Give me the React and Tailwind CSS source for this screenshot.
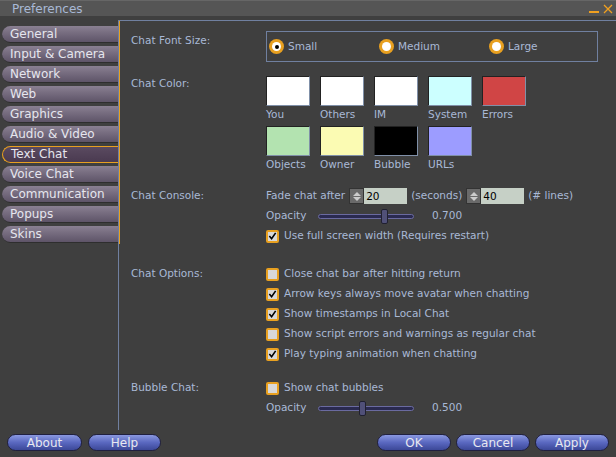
import React from "react";

const tabs = ["General","Input & Camera","Network","Web","Graphics","Audio & Video","Text Chat","Voice Chat","Communication","Popups","Skins"];
const sw1 = [["You","#ffffff"],["Others","#ffffff"],["IM","#ffffff"],["System","#ccffff"],["Errors","#d04545"]];
const sw2 = [["Objects","#b3e3b0"],["Owner","#fbfbb3"],["Bubble","#000000"],["URLs","#9c9cff"]];

function Radio({ on, label }) {
  return (
    <div className="flex items-center gap-1">
      <div className="w-[15px] h-[15px] rounded-full bg-[#e8a020] flex items-center justify-center">
        <div className="w-[9px] h-[9px] rounded-full bg-white flex items-center justify-center">
          {on && <div className="w-[4px] h-[4px] rounded-full bg-black" />}
        </div>
      </div>
      <span>{label}</span>
    </div>
  );
}
function Check({ on, label }) {
  return (
    <div className="flex items-center gap-[5px] h-[20px]">
      <div className="w-[13px] h-[13px] rounded-[2px] border-2 border-[#e8a020] bg-[#d8d8d8] flex items-center justify-center">
        {on && <svg width="10" height="10" viewBox="0 0 10 10"><path d="M1.5 5 L4 8 L8.5 1.5" stroke="#000" strokeWidth="1.8" fill="none"/></svg>}
      </div>
      <span>{label}</span>
    </div>
  );
}
function Slider({ pos, value }) {
  return (
    <div className="flex items-center h-[20px]">
      <span className="w-[52px]">Opacity</span>
      <div className="relative w-[96px] h-[5px] rounded-full bg-[#2a2a50] border border-[#6a6aa0]">
        <div className="absolute top-[-6px] w-[7px] h-[15px] rounded-[2px] bg-[#505078] border border-[#202030]" style={{ left: pos }} />
      </div>
      <span className="ml-[18px]">{value}</span>
    </div>
  );
}
function Spin({ v }) {
  return (
    <div className="flex items-center">
      <div className="w-[15px] h-[16px] bg-[#6a6a6a] border border-[#333] flex flex-col items-center justify-center gap-[1px]">
        <div className="w-0 h-0 border-l-[4px] border-r-[4px] border-b-[4px] border-l-transparent border-r-transparent border-b-[#ccc]" />
        <div className="w-0 h-0 border-l-[4px] border-r-[4px] border-t-[4px] border-l-transparent border-r-transparent border-t-[#ccc]" />
      </div>
      <div className="h-[16px] bg-[#c6d0c6] text-black pl-[2px] leading-[16px]" style={{ width: 43 }}>{v}</div>
    </div>
  );
}
function Btn({ t, w }) {
  return (
    <div className="h-[17px] rounded-full border border-[#202040] bg-gradient-to-b from-[#8a98e0] via-[#5a68c0] to-[#3c4898] text-[#e8e8f0] flex items-center justify-center text-[12px]" style={{ width: w }}>{t}</div>
  );
}

export default function App() {
  return (
    <div className="w-[616px] h-[457px] bg-[#3f3f3f] text-[#a9b9d6] text-[10.5px] overflow-hidden flex flex-col" style={{ fontFamily: '"DejaVu Sans", sans-serif' }}>
      <div className="h-[16px] bg-[#555555] flex items-center justify-between pl-[12px] pr-[3px] border-t border-[#666]">
        <span className="text-[12px]">Preferences</span>
        <div className="flex items-center gap-[4px] text-[#f0a020]">
          <div className="w-[10px] h-[2px] bg-[#f0a020] mt-[6px]" />
          <svg width="10" height="10" viewBox="0 0 10 10"><path d="M1 1 L9 9 M9 1 L1 9" stroke="#f0a020" strokeWidth="1.3"/></svg>
        </div>
      </div>
      <div className="flex h-[410px] mt-[4px]">
        <div className="w-[120px] pt-[4px] flex flex-col border-r-2 border-[#e8a020] h-[224px]">
          {tabs.map((t) => {
            const sel = t === "Text Chat";
            return (
              <div key={t} className="h-[20px] shrink-0 flex items-center">
                <div className={"ml-[2px] h-[17px] w-full rounded-l-full flex items-center pl-[8px] text-[12px] text-[#e6e6ee] " + (sel ? "bg-gradient-to-b from-[#5a4a60] to-[#4a3a50] border border-[#e8a020] border-r-0" : "bg-gradient-to-b from-[#8a8092] to-[#5e5468] border-b border-[#2e2e2e]")}>{t}</div>
              </div>
            );
          })}
        </div>
        <div className="flex-1 border-t border-l border-[#7080a0] ml-[-2px] pl-[12px] pt-[10px]">
          <div className="grid grid-cols-[135px_1fr]">
            <div className="pt-[2px]">Chat Font Size:</div>
            <div className="w-[332px] h-[31px] border border-[#7080a0] flex items-center pl-[2px] gap-0">
              <div className="w-[110px]"><Radio on label="Small" /></div>
              <div className="w-[110px]"><Radio label="Medium" /></div>
              <Radio label="Large" />
            </div>

            <div className="mt-[14px]">Chat Color:</div>
            <div className="mt-[14px] flex flex-col gap-[4px]">
              {[sw1, sw2].map((row, i) => (
                <div key={i} className="flex gap-[10px]">
                  {row.map(([n, c]) => (
                    <div key={n} className="w-[44px] flex flex-col">
                      <div className="h-[30px] border border-[#222] border-b-[#8090a8] border-r-[#8090a8]" style={{ background: c }} />
                      <span className="leading-[16px]">{n}</span>
                    </div>
                  ))}
                </div>
              ))}
            </div>

            <div className="mt-[16px]">Chat Console:</div>
            <div className="mt-[14px] flex flex-col">
              <div className="flex items-center gap-[4px] h-[20px]">
                <span>Fade chat after</span><Spin v="20" /><span>(seconds)</span><Spin v="40" /><span>(# lines)</span>
              </div>
              <Slider pos={62} value="0.700" />
              <Check on label="Use full screen width  (Requires restart)" />
            </div>

            <div className="mt-[18px] pt-[2px]">Chat Options:</div>
            <div className="mt-[18px] flex flex-col">
              <Check label="Close chat bar after hitting return" />
              <Check on label="Arrow keys always move avatar when chatting" />
              <Check on label="Show timestamps in Local Chat" />
              <Check label="Show script errors and warnings as regular chat" />
              <Check on label="Play typing animation when chatting" />
            </div>

            <div className="mt-[14px] pt-[2px]">Bubble Chat:</div>
            <div className="mt-[14px] flex flex-col">
              <Check label="Show chat bubbles" />
              <Slider pos={40} value="0.500" />
            </div>
          </div>
        </div>
      </div>
      <div className="flex items-center justify-between px-[7px] pt-[4px]">
        <div className="flex gap-[6px]"><Btn t="About" w={75} /><Btn t="Help" w={73} /></div>
        <div className="flex gap-[5px]"><Btn t="OK" w={74} /><Btn t="Cancel" w={74} /><Btn t="Apply" w={74} /></div>
      </div>
    </div>
  );
}
